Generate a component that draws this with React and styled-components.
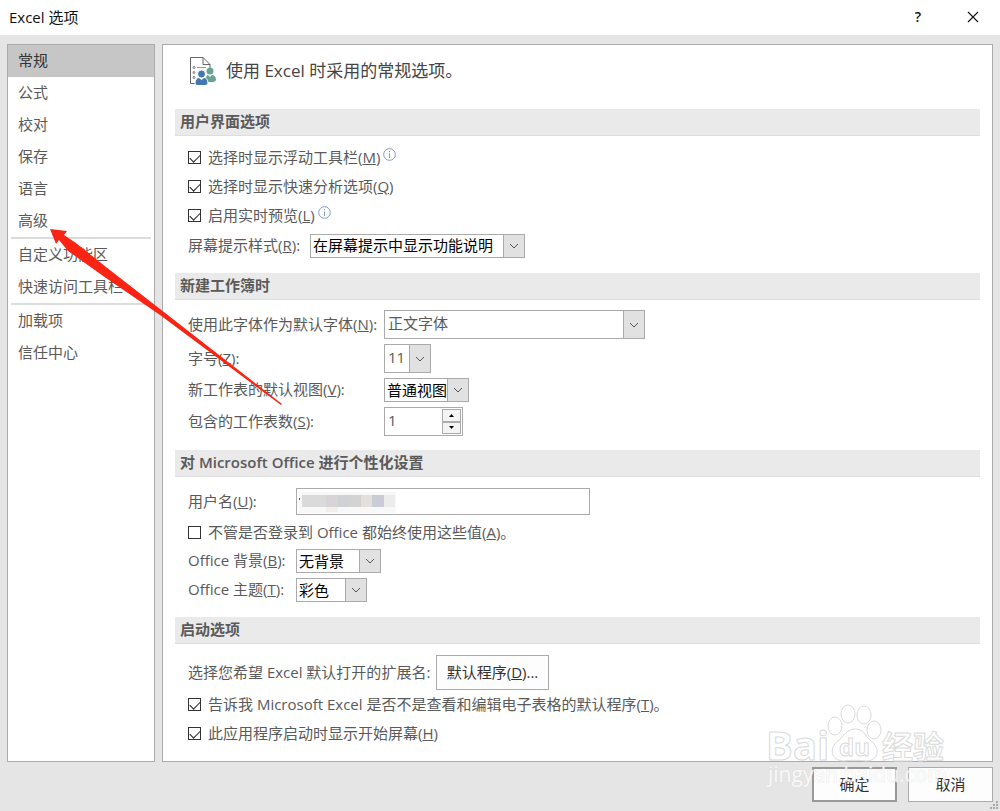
import React, { useState } from "react";
import styled, { createGlobalStyle } from "styled-components";

const GlobalStyle = createGlobalStyle`
  * {
    box-sizing: border-box;
  }
  body {
    margin: 0;
    background: #e5e5e5;
  }
  body, button, input, select {
    font-family: "Open Sans", "Noto Sans CJK SC", sans-serif;
    font-size: 15px;
    line-height: 20px;
    color: #5a5a5a;
  }
`;

// Window frame
const Window = styled.div`
  position: relative;
  display: flex;
  flex-direction: column;
  min-height: 100vh;
  background: #e5e5e5;
  overflow: hidden;
`;

const TitleBar = styled.header`
  display: flex;
  align-items: center;
  height: 35px;
  padding: 0 12px 2px 9px;
  background: #fff;
`;

const Title = styled.h1`
  flex: 1;
  margin: 0;
  font-size: 15px;
  font-weight: 400;
  color: #111;
`;

const TitleButton = styled.button`
  display: flex;
  align-items: center;
  justify-content: center;
  width: 30px;
  height: 30px;
  margin-left: 25px;
  padding: 0;
  border: none;
  background: none;
  color: #111;
  font-size: 14px;
  font-weight: 600;
`;

const Body = styled.div`
  flex: 1;
  display: flex;
  gap: 7px;
  padding: 9px 7px 0;
`;

// Sidebar
const Sidebar = styled.nav`
  flex: none;
  width: 148px;
  border: 1px solid #ababab;
  background: #fff;
`;

const NavItem = styled.button`
  display: block;
  width: 100%;
  height: 32px;
  padding: 0 10px 2px;
  border: none;
  background: ${(p) => (p.$active ? "#c6c6c6" : "transparent")};
  color: ${(p) => (p.$active ? "#333" : "#5a5a5a")};
  text-align: left;
`;

const Divider = styled.hr`
  height: 2px;
  margin: 0 3px;
  border: none;
  background: #dcdcdc;
`;

// Content
const Content = styled.main`
  flex: 1;
  min-width: 0;
  padding: 0 12px 13px;
  border: 1px solid #ababab;
  background: #fff;
`;

const Intro = styled.div`
  display: flex;
  align-items: center;
  gap: 9px;
  height: 64px;
  padding: 0 0 13px 14px;
  font-size: 17px;
  color: #444;
`;

const SectionTitle = styled.h2`
  height: 27px;
  margin: 0;
  padding: 2px 5px;
  border-bottom: 1px solid #dedede;
  background: #eaeaea;
  font-size: 15px;
  font-weight: 600;
  color: #5a5a5a;
`;

const Rows = styled.div`
  display: flex;
  flex-direction: column;
  gap: ${(p) => p.$gap || 0}px;
  padding: ${(p) => p.$top}px 12px ${(p) => p.$bottom}px 13px;
`;

const Row = styled.div`
  display: flex;
  align-items: center;
  min-height: ${(p) => p.$height}px;
`;

const Label = styled.label`
  flex: none;
  width: ${(p) => (p.$width ? `${p.$width}px` : "auto")};
  padding-bottom: 2px;
  white-space: nowrap;
`;

const CheckLabel = styled.label`
  display: flex;
  align-items: center;
  gap: 7px;
  white-space: nowrap;
  span {
    padding-bottom: 1px;
  }
`;

const CheckBox = styled.input`
  appearance: none;
  flex: none;
  width: 13px;
  height: 13px;
  margin: 0;
  border: 1px solid #333;
  background: #fff;
  display: grid;
  place-items: center;
  &:checked::before {
    content: "";
    width: 9px;
    height: 5px;
    border-left: 1px solid #222;
    border-bottom: 1px solid #222;
    transform: translateY(-1px) rotate(-45deg);
  }
`;

const InfoIcon = styled.svg`
  margin: 0 0 6px 3px;
`;

// Drop-downs: the arrow sits in the same grid cell as the select
const SelectBox = styled.div`
  display: grid;
  width: ${(p) => p.$width}px;
  height: ${(p) => (p.$tall ? 29 : 24)}px;
  select {
    grid-area: 1 / 1;
    appearance: none;
    width: 100%;
    height: 100%;
    padding: 0 0 ${(p) => (p.$tall ? 3 : 1)}px ${(p) => (p.$tall ? 3 : 2)}px;
    border: 1px solid #ababab;
    border-radius: 0;
    background: #fff;
    color: ${(p) => (p.$tall ? "#5a5a5a" : "#000")};
  }
`;

const Arrow = styled.span`
  grid-area: 1 / 1;
  justify-self: end;
  display: flex;
  align-items: center;
  justify-content: center;
  width: 22px;
  border: 1px solid #ababab;
  background: #e1e1e1;
  pointer-events: none;
`;

const Spinner = styled.div`
  display: flex;
  width: 79px;
  height: 29px;
  padding: 1px;
  border: 1px solid #ababab;
  background: #fff;
  input {
    flex: 1;
    min-width: 0;
    appearance: textfield;
    padding: 0 0 3px 2px;
    border: none;
    background: none;
  }
  input::-webkit-inner-spin-button {
    display: none;
  }
`;

const SpinButtons = styled.div`
  display: grid;
  grid-template-rows: 1fr 1fr;
  width: 19px;
`;

const SpinButton = styled.button`
  display: flex;
  align-items: center;
  justify-content: center;
  padding: 0;
  border: 1px solid #ababab;
  background: #f4f4f4;
`;

const NameField = styled.div`
  display: grid;
  width: 294px;
  height: 27px;
  input {
    grid-area: 1 / 1;
    width: 100%;
    border: 1px solid #ababab;
    background: #fff;
  }
  svg {
    grid-area: 1 / 1;
    pointer-events: none;
  }
`;

const Button = styled.button`
  width: ${(p) => p.$width}px;
  height: 35px;
  padding: 0 0 2px;
  border: ${(p) => (p.$primary ? "2px solid #999" : "1px solid #ababab")};
  background: #fdfdfd;
  color: #333;
`;

const Footer = styled.footer`
  display: flex;
  justify-content: flex-end;
  gap: 11px;
  padding: 5px 7px 9px;
`;

// Overlays
const Grip = styled.svg`
  position: absolute;
  right: 1px;
  bottom: 1px;
`;

const Pointer = styled.svg`
  position: absolute;
  left: 48px;
  top: 226px;
  pointer-events: none;
`;

const Watermark = styled.svg`
  position: absolute;
  right: 50px;
  bottom: 16px;
  pointer-events: none;
`;

const navGroups = [
  ["常规", "公式", "校对", "保存", "语言", "高级"],
  ["自定义功能区", "快速访问工具栏"],
  ["加载项", "信任中心"],
];

const Check = ({ checked, info, children }) => (
  <>
    <CheckLabel>
      <CheckBox type="checkbox" defaultChecked={checked} />
      <span>{children}</span>
    </CheckLabel>
    {info && (
      <InfoIcon width="13" height="13" viewBox="0 0 13 13" fill="none" stroke="#7d9cc0">
        <circle cx="6.5" cy="6.5" r="5.8" />
        <path d="M6.5 5.5v4.5M6.5 3v1.3" />
      </InfoIcon>
    )}
  </>
);

const Select = ({ id, width, tall, options }) => (
  <SelectBox $width={width} $tall={tall}>
    <select id={id}>
      {options.map((o) => (
        <option key={o}>{o}</option>
      ))}
    </select>
    <Arrow>
      <svg width="10" height="6" viewBox="0 0 10 6" fill="none" stroke="#555">
        <path d="M1 1l4 4 4-4" />
      </svg>
    </Arrow>
  </SelectBox>
);

const App = () => {
  const [active, setActive] = useState("常规");
  const [sheets, setSheets] = useState(1);

  return (
    <Window>
      <GlobalStyle />
      <TitleBar>
        <Title>Excel 选项</Title>
        <TitleButton aria-label="帮助">?</TitleButton>
        <TitleButton aria-label="关闭">
          <svg width="12" height="12" viewBox="0 0 12 12" stroke="#111" strokeWidth="1.1">
            <path d="M1 1l10 10M11 1L1 11" />
          </svg>
        </TitleButton>
      </TitleBar>

      <Body>
        <Sidebar>
          {navGroups.map((group, i) => (
            <React.Fragment key={group[0]}>
              {i > 0 && <Divider />}
              {group.map((name) => (
                <NavItem key={name} $active={name === active} onClick={() => setActive(name)}>
                  {name}
                </NavItem>
              ))}
            </React.Fragment>
          ))}
        </Sidebar>

        <Content>
          <Intro>
            <svg width="28" height="30" viewBox="0 0 28 30" fill="none">
              <path d="M6 27.5H1.5V1.5H14L21 8.500V12" stroke="#666" />
              <path d="M14 1.500V8.500H21" stroke="#666" />
              <path d="M8 11.500H17" stroke="#999" />
              <g stroke="#777">
                <circle cx="5" cy="11.500" r="1" />
                <circle cx="5" cy="16.500" r="1" />
                <circle cx="5" cy="21.500" r="1" />
              </g>
              <g fill="#69a58e">
                <circle cx="21" cy="15" r="3.500" />
                <path d="M17 26c-1-5 1-7 2-7l2 2 2-2c2 0 4 2 4 4.500c0 2-2 2.500-4 2.500z" />
              </g>
              <g fill="#4377b0" stroke="#fff">
                <circle cx="12.500" cy="18" r="4" />
                <path d="M6 27c0-3 2-5.500 4-5.500l2.500 2 2.500-2c2 0 4 2.500 4 5.500c0 1.500-1.500 2.500-3 2.500H9c-2 0-3-1-3-2.500z" />
              </g>
            </svg>
            <span>使用 Excel 时采用的常规选项。</span>
          </Intro>

          <SectionTitle>用户界面选项</SectionTitle>
          <Rows $top={7} $bottom={12}>
            <Row $height={29}>
              <Check checked info>选择时显示浮动工具栏(<u>M</u>)</Check>
            </Row>
            <Row $height={29}>
              <Check checked>选择时显示快速分析选项(<u>Q</u>)</Check>
            </Row>
            <Row $height={29}>
              <Check checked info>启用实时预览(<u>L</u>)</Check>
            </Row>
            <Row $height={31}>
              <Label htmlFor="tips" $width={122}>屏幕提示样式(<u>R</u>):</Label>
              <Select id="tips" width={215} options={["在屏幕提示中显示功能说明"]} />
            </Row>
          </Rows>

          <SectionTitle>新建工作簿时</SectionTitle>
          <Rows $top={10} $bottom={14} $gap={5}>
            <Row>
              <Label htmlFor="font" $width={196}>使用此字体作为默认字体(<u>N</u>):</Label>
              <Select id="font" width={261} tall options={["正文字体"]} />
            </Row>
            <Row>
              <Label htmlFor="size" $width={196}>字号(<u>Z</u>):</Label>
              <Select id="size" width={47} tall options={["11"]} />
            </Row>
            <Row>
              <Label htmlFor="view" $width={196}>新工作表的默认视图(<u>V</u>):</Label>
              <Select id="view" width={85} options={["普通视图"]} />
            </Row>
            <Row>
              <Label htmlFor="sheets" $width={196}>包含的工作表数(<u>S</u>):</Label>
              <Spinner>
                <input
                  id="sheets"
                  type="number"
                  value={sheets}
                  onChange={(e) => setSheets(Number(e.target.value))}
                />
                <SpinButtons>
                  <SpinButton aria-label="增加" onClick={() => setSheets(sheets + 1)}>
                    <svg width="5" height="3" viewBox="0 0 5 3"><path d="M0 3L2.500 0L5 3z" /></svg>
                  </SpinButton>
                  <SpinButton aria-label="减少" onClick={() => setSheets(Math.max(1, sheets - 1))}>
                    <svg width="5" height="3" viewBox="0 0 5 3"><path d="M0 0L2.500 3L5 0z" /></svg>
                  </SpinButton>
                </SpinButtons>
              </Spinner>
            </Row>
          </Rows>

          <SectionTitle>对 Microsoft Office 进行个性化设置</SectionTitle>
          <Rows $top={11} $bottom={15} $gap={5}>
            <Row>
              <Label htmlFor="user" $width={108}>用户名(<u>U</u>):</Label>
              <NameField>
                <input id="user" type="text" />
                {/* pixelated user name */}
                <svg width="110" height="27" viewBox="0 0 110 27">
                  <rect x="3" y="4" width="97" height="21" fill="#f8f8f8" />
                  <rect x="6" y="7" width="24" height="12" fill="#dadada" />
                  <rect x="30" y="7" width="12" height="12" fill="#d6d4d6" />
                  <rect x="42" y="7" width="12" height="12" fill="#cfd1d5" />
                  <rect x="54" y="7" width="11" height="12" fill="#d3d3d3" />
                  <rect x="65" y="7" width="11" height="12" fill="#e3dfdb" />
                  <rect x="76" y="7" width="12" height="12" fill="#c9ccd4" />
                  <rect x="88" y="7" width="11" height="12" fill="#ececec" />
                  <rect x="30" y="19" width="12" height="5" fill="#f2eeea" />
                  <rect x="3" y="10" width="1" height="2" fill="#555" />
                </svg>
              </NameField>
            </Row>
            <Row $height={24}>
              <Check>不管是否登录到 Office 都始终使用这些值(<u>A</u>)。</Check>
            </Row>
            <Row>
              <Label htmlFor="background" $width={108}>Office 背景(<u>B</u>):</Label>
              <Select id="background" width={85} options={["无背景"]} />
            </Row>
            <Row>
              <Label htmlFor="theme" $width={108}>Office 主题(<u>T</u>):</Label>
              <Select id="theme" width={71} options={["彩色"]} />
            </Row>
          </Rows>

          <SectionTitle>启动选项</SectionTitle>
          <Rows $top={11} $bottom={0}>
            <Row>
              <Label id="ext" $width={248}>选择您希望 Excel 默认打开的扩展名:</Label>
              <Button $width={113} aria-describedby="ext">默认程序(<u>D</u>)...</Button>
            </Row>
            <Row $height={29}>
              <Check checked>告诉我 Microsoft Excel 是否不是查看和编辑电子表格的默认程序(<u>T</u>)。</Check>
            </Row>
            <Row $height={29}>
              <Check checked>此应用程序启动时显示开始屏幕(<u>H</u>)</Check>
            </Row>
          </Rows>
        </Content>
      </Body>

      <Footer>
        <Button $width={85} $primary>确定</Button>
        <Button $width={85}>取消</Button>
      </Footer>

      <Grip width="9" height="9" viewBox="0 0 9 9" fill="#aaa">
        <path d="M6 0h2v2h-2zM3 3h2v2h-2zM6 3h2v2h-2zM0 6h2v2h-2zM3 6h2v2h-2zM6 6h2v2h-2z" />
      </Grip>

      <Pointer width="236" height="182" viewBox="0 0 236 182" fill="#f92413">
        <path d="M2 3L19 5L16 9L28 17L58 41L112 83L234 178L233 179L112 89L58 52L20 25L11 14L8 18z" />
      </Pointer>

      <Watermark width="184" height="94" viewBox="0 0 184 94" fill="#fff" stroke="#dadada">
        <g fontFamily="Open Sans, sans-serif" fontWeight="700">
          <text x="0" y="59" fontSize="40">Bai</text>
          <ellipse cx="69" cy="25" rx="7" ry="9" />
          <ellipse cx="82" cy="13" rx="7" ry="9" />
          <ellipse cx="98" cy="14" rx="7" ry="9" />
          <ellipse cx="108" cy="29" rx="7" ry="9" />
          <path d="M89 28c8 0 10 6 15 11c11 8 9 21-4 21c-7-1-15-1-22 0c-13 0-16-13-5-21c6-5 8-11 16-11z" />
          <text x="73" y="55" fontSize="24">du</text>
        </g>
        <text x="116" y="57" fontSize="31" fontWeight="700" fontFamily="Noto Sans CJK SC, sans-serif">经验</text>
        <text
          x="2"
          y="81"
          fontSize="21"
          fontFamily="Open Sans, sans-serif"
          fillOpacity="0.8"
          strokeOpacity="0.5"
          paintOrder="stroke"
        >
          jingyan.baidu.com
        </text>
      </Watermark>
    </Window>
  );
};

export default App;
